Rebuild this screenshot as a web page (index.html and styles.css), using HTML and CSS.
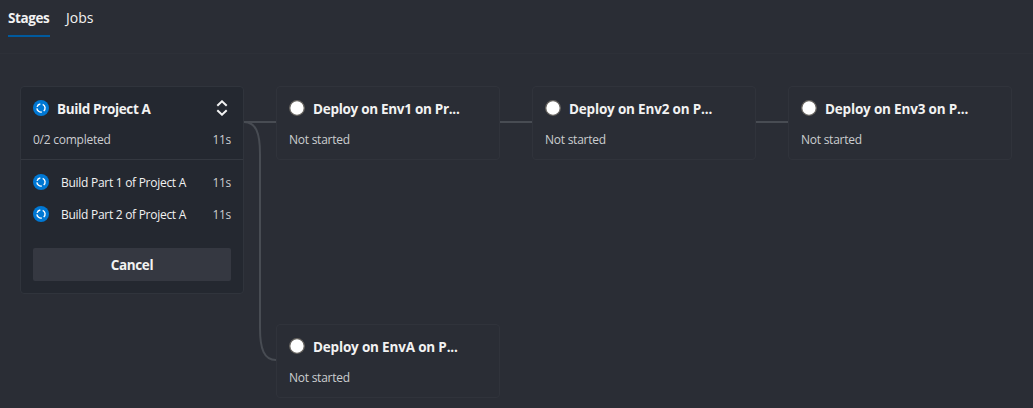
FILE: index.html
```html
<!DOCTYPE html>
<html lang="en">
<head>
<meta charset="utf-8">
<title>Stages</title>
<link rel="stylesheet" href="styles.css">
</head>
<body>
<svg class="defs" aria-hidden="true">
  <symbol id="running" viewBox="0 0 16 16">
    <circle cx="8" cy="8" r="8" fill="#0078d4"/>
    <path d="M7.3 4A4.1 4.1 0 0 0 4.1 6.9M3.9 8.4A4.1 4.1 0 0 0 8.8 12M9.7 4.3A4.1 4.1 0 0 1 10.7 11.1" fill="none" stroke="#fff" stroke-width="1.4"/>
  </symbol>
  <symbol id="pending" viewBox="0 0 16 16">
    <circle cx="8" cy="8" r="7.3" fill="#fff" stroke="#66635f" stroke-width="1.3"/>
  </symbol>
</svg>
<nav class="tabs">
  <a class="tab tab-active">Stages</a>
  <a class="tab tab-jobs">Jobs</a>
</nav>
<main class="canvas">
  <svg class="links" width="1033" height="355" fill="none" stroke="#484c53" stroke-width="2">
    <path d="M244 69H276M500 69H532M756 69H788"/>
    <path d="M244 69C256 69 260 80 260 101V275C260 296 264 307 276 307"/>
  </svg>
  <div class="grid">
    <section class="card card-running">
      <div class="head">
        <svg class="icon"><use href="#running"/></svg>
        <h2 class="title title-build">Build Project A</h2>
        <svg class="toggle" viewBox="0 0 12 16" fill="none" stroke="#f2f2f2" stroke-width="2"><path d="M1.3 5.8L6 1.3L10.7 5.8M1.3 10.2L6 14.7L10.7 10.2"/></svg>
      </div>
      <div class="status"><span class="progress">0/2 completed</span><span class="time">11s</span></div>
      <div class="jobs">
        <div class="job"><svg class="icon"><use href="#running"/></svg><span class="job-name">Build Part 1 of Project A</span><span class="time">11s</span></div>
        <div class="job"><svg class="icon"><use href="#running"/></svg><span class="job-name">Build Part 2 of Project A</span><span class="time">11s</span></div>
      </div>
      <button class="cancel">Cancel</button>
    </section>
    <section class="card">
      <div class="head"><svg class="icon"><use href="#pending"/></svg><h2 class="title title-first">Deploy on Env1 on Pr...</h2></div>
      <div class="status"><span class="idle">Not started</span></div>
    </section>
    <section class="card">
      <div class="head"><svg class="icon"><use href="#pending"/></svg><h2 class="title">Deploy on Env2 on P...</h2></div>
      <div class="status"><span class="idle">Not started</span></div>
    </section>
    <section class="card">
      <div class="head"><svg class="icon"><use href="#pending"/></svg><h2 class="title">Deploy on Env3 on P...</h2></div>
      <div class="status"><span class="idle">Not started</span></div>
    </section>
    <section class="card card-second-row">
      <div class="head"><svg class="icon"><use href="#pending"/></svg><h2 class="title">Deploy on EnvA on P...</h2></div>
      <div class="status"><span class="idle">Not started</span></div>
    </section>
  </div>
</main>
</body>
</html>
```

FILE: styles.css
```css
* { box-sizing: border-box; }
body {
  margin: 0;
  height: 408px;
  overflow: hidden;
  background: #2a2d35;
  color: #f2f2f2;
  font-family: "Open Sans", "Noto Sans", sans-serif;
}
.defs { display: block; width: 0; height: 0; }
.tabs {
  display: flex;
  gap: 16px;
  height: 53px;
  padding-left: 8px;
}
.tab {
  height: 37px;
  font-size: 13.5px;
  line-height: 37px;
  white-space: nowrap;
}
.tab-active {
  width: 42px;
  border-bottom: 2px solid #005a9e;
  font-weight: 700;
  letter-spacing: -0.4px;
}
.tab-jobs { font-size: 14px; line-height: 36px; }
.canvas {
  position: relative;
  height: 355px;
  padding: 32px 20px 0;
  border-top: 1px solid #2d3038;
}
.links { position: absolute; left: 0; top: -1px; }
.grid {
  display: grid;
  grid-template-columns: repeat(4, 224px);
  grid-template-rows: 208px 74px;
  column-gap: 32px;
  row-gap: 30px;
  align-items: start;
}
.card {
  height: 74px;
  padding: 0 12px;
  border: 1px solid #30333b;
  border-radius: 4px;
}
.card-running { height: 208px; background: #242830; border-color: #30343c; }
.card-second-row { grid-column: 2; }
.head {
  display: flex;
  align-items: center;
  height: 42px;
}
.icon { flex: none; width: 16px; height: 16px; }
.title {
  flex: 1;
  margin: 2px 0 0 8px;
  font-size: 13.5px;
  line-height: 20px;
  font-weight: 700;
  letter-spacing: -0.18px;
  white-space: nowrap;
}
.title-first { letter-spacing: -0.29px; }
.title-build { letter-spacing: -0.36px; }
.toggle { width: 12px; height: 16px; margin-right: 3px; }
.status {
  display: flex;
  justify-content: space-between;
  height: 30px;
  font-size: 12px;
  line-height: 22px;
  color: #cccdd0;
  letter-spacing: -0.25px;
}
.time { color: #cccdd0; letter-spacing: -0.3px; }
.jobs {
  margin: 0 -12px;
  padding: 6px 12px 0;
  border-top: 1px solid #343840;
  font-size: 12px;
}
.job { display: flex; align-items: center; height: 32px; }
.job-name { flex: 1; margin-left: 12px; color: #f2f2f2; white-space: nowrap; letter-spacing: -0.28px; }
.cancel {
  display: block;
  width: 198px;
  height: 33px;
  margin-top: 18px;
  padding: 1px 0 0;
  border: 0;
  border-radius: 2px;
  background: #353841;
  color: #f2f2f2;
  font: 700 13.5px/32px "Open Sans", "Noto Sans", sans-serif;
  letter-spacing: -0.35px;
}
```
